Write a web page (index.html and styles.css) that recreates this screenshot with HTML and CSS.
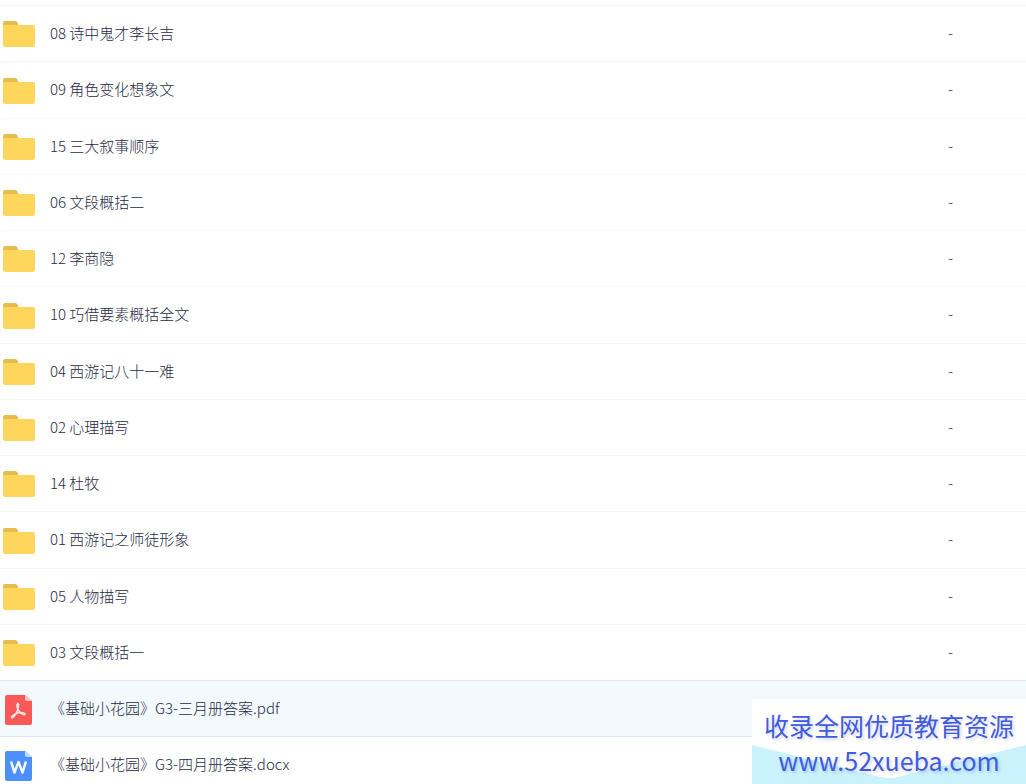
FILE: index.html
```
<!DOCTYPE html>
<html lang="zh-CN">
<head>
    <meta charset="UTF-8">
    <meta name="viewport" content="width=device-width, initial-scale=1.0">
    <title>文件列表</title>
    <link rel="stylesheet" href="styles.css">
</head>
<body>
    <!-- shared icons -->
    <svg class="icon-defs" width="0" height="0" aria-hidden="true">
        <symbol id="icon-folder" viewBox="0 0 32 28">
            <path d="M0 12V3Q0 1 2 1H12Q14 1 14.500 2.500L16 7V12Z" fill="#e6bd4f"/>
            <path d="M0 5H30Q32 5 32 7V25Q32 27 30 27H2Q0 27 0 25Z" fill="#ffd65c"/>
        </symbol>
        <symbol id="icon-pdf" viewBox="0 0 32 30">
            <path d="M4 0H22L29 6V28Q29 30 27 30H4Q2 30 2 28V2Q2 0 4 0Z" fill="#fb5858"/>
            <path d="M22 0L29 6H24Q22 6 22 4Z" fill="#ffc4c4"/>
            <path d="M14.500 8.500C16.500 8 15.500 12.500 14.500 15C13 19 10.500 22.500 9 23C7.500 22.500 10 19.500 14 18.300C18 17 22 17.500 22 19.200C21 21 17 18 15.500 15.500C14 13 13.500 9.500 14.500 8.500Z" fill="none" stroke="#ffe9e9" stroke-width="1.500" stroke-linejoin="round"/>
        </symbol>
        <symbol id="icon-word" viewBox="0 0 32 30">
            <path d="M4 0H22L29 6V28Q29 30 27 30H4Q2 30 2 28V2Q2 0 4 0Z" fill="#4b90fb"/>
            <path d="M22 0L29 6H24Q22 6 22 4Z" fill="#c0dafe"/>
            <path d="M8 10.500L11.500 21.500L15.500 11L19.500 21.500L23 10.500" fill="none" stroke="#f2f7ff" stroke-width="2.500" stroke-linejoin="round"/>
        </symbol>
    </svg>

    <table class="file-list">
        <tbody>
            <tr>
                <td class="name"><a href="#"><svg class="icon folder"><use href="#icon-folder"/></svg>08 诗中鬼才李长吉</a></td>
                <td class="size">-</td>
            </tr>
            <tr>
                <td class="name"><a href="#"><svg class="icon folder"><use href="#icon-folder"/></svg>09 角色变化想象文</a></td>
                <td class="size">-</td>
            </tr>
            <tr>
                <td class="name"><a href="#"><svg class="icon folder"><use href="#icon-folder"/></svg>15 三大叙事顺序</a></td>
                <td class="size">-</td>
            </tr>
            <tr>
                <td class="name"><a href="#"><svg class="icon folder"><use href="#icon-folder"/></svg>06 文段概括二</a></td>
                <td class="size">-</td>
            </tr>
            <tr>
                <td class="name"><a href="#"><svg class="icon folder"><use href="#icon-folder"/></svg>12 李商隐</a></td>
                <td class="size">-</td>
            </tr>
            <tr>
                <td class="name"><a href="#"><svg class="icon folder"><use href="#icon-folder"/></svg>10 巧借要素概括全文</a></td>
                <td class="size">-</td>
            </tr>
            <tr>
                <td class="name"><a href="#"><svg class="icon folder"><use href="#icon-folder"/></svg>04 西游记八十一难</a></td>
                <td class="size">-</td>
            </tr>
            <tr>
                <td class="name"><a href="#"><svg class="icon folder"><use href="#icon-folder"/></svg>02 心理描写</a></td>
                <td class="size">-</td>
            </tr>
            <tr>
                <td class="name"><a href="#"><svg class="icon folder"><use href="#icon-folder"/></svg>14 杜牧</a></td>
                <td class="size">-</td>
            </tr>
            <tr>
                <td class="name"><a href="#"><svg class="icon folder"><use href="#icon-folder"/></svg>01 西游记之师徒形象</a></td>
                <td class="size">-</td>
            </tr>
            <tr>
                <td class="name"><a href="#"><svg class="icon folder"><use href="#icon-folder"/></svg>05 人物描写</a></td>
                <td class="size">-</td>
            </tr>
            <tr>
                <td class="name"><a href="#"><svg class="icon folder"><use href="#icon-folder"/></svg>03 文段概括一</a></td>
                <td class="size">-</td>
            </tr>
            <tr class="active">
                <td class="name"><a href="#"><svg class="icon"><use href="#icon-pdf"/></svg>《基础小花园》G3-三月册答案.pdf</a></td>
                <td class="size"></td>
            </tr>
            <tr>
                <td class="name"><a href="#"><svg class="icon"><use href="#icon-word"/></svg>《基础小花园》G3-四月册答案.docx</a></td>
                <td class="size"></td>
            </tr>
        </tbody>
    </table>

    <div class="banner">
        <svg class="banner-bg" viewBox="0 0 274 85" preserveAspectRatio="none" aria-hidden="true">
            <path d="M0 46L124 77Q137 81 150 77L274 46V85H0Z" fill="#c9f2fd"/>
        </svg>
        <div class="banner-title">收录全网优质教育资源</div>
        <div class="banner-url">www.52xueba.com</div>
    </div>
</body>
</html>
```
FILE: styles.css
```
body {
    font-family: "Noto Sans CJK SC", sans-serif;
    margin: 0;
    padding-top: 5px;
    height: 100vh;
    box-sizing: border-box;
    overflow: hidden;
    background-color: #fff;
    color: #1f2a44;
}
.icon-defs {
    position: absolute;
}
.file-list {
    width: 100%;
    border-collapse: separate;
    border-spacing: 0;
    font-size: 15px;
    font-weight: 300;
    line-height: 20px;
}
.file-list td {
    height: 56px;
    box-sizing: border-box;
    padding: 0 0 2px;
    border-top: 1px solid #f5f6f8;
}
.file-list tr:nth-child(4n+2) td {
    height: 57px;
}
.file-list .name a {
    display: flex;
    align-items: center;
    gap: 15px;
    padding-left: 3px;
    color: #1f2a44;
    text-decoration: none;
}
.icon {
    width: 32px;
    height: 30px;
    margin-top: 4px;
}
.icon.folder {
    height: 28px;
    margin-top: 3px;
}
.file-list .size {
    width: 78px;
    color: #333;
}
.file-list .active td {
    background-color: #f3fafe;
    border-top-color: #d9e8f8;
}
.file-list .active + tr td {
    border-top-color: #d9e8f8;
}

/* promo box in the corner */
.banner {
    position: fixed;
    right: 0;
    bottom: 0;
    padding: 9px 12px 6px;
    background-color: #fff;
    color: #405be0;
    font-size: 25px;
    text-align: center;
    text-shadow: 2px 2px 3px rgba(60, 70, 140, 0.2);
}
.banner-bg {
    position: absolute;
    left: 0;
    top: 0;
    width: 100%;
    height: 100%;
}
.banner-title,
.banner-url {
    position: relative;
    line-height: 35px;
}
```
